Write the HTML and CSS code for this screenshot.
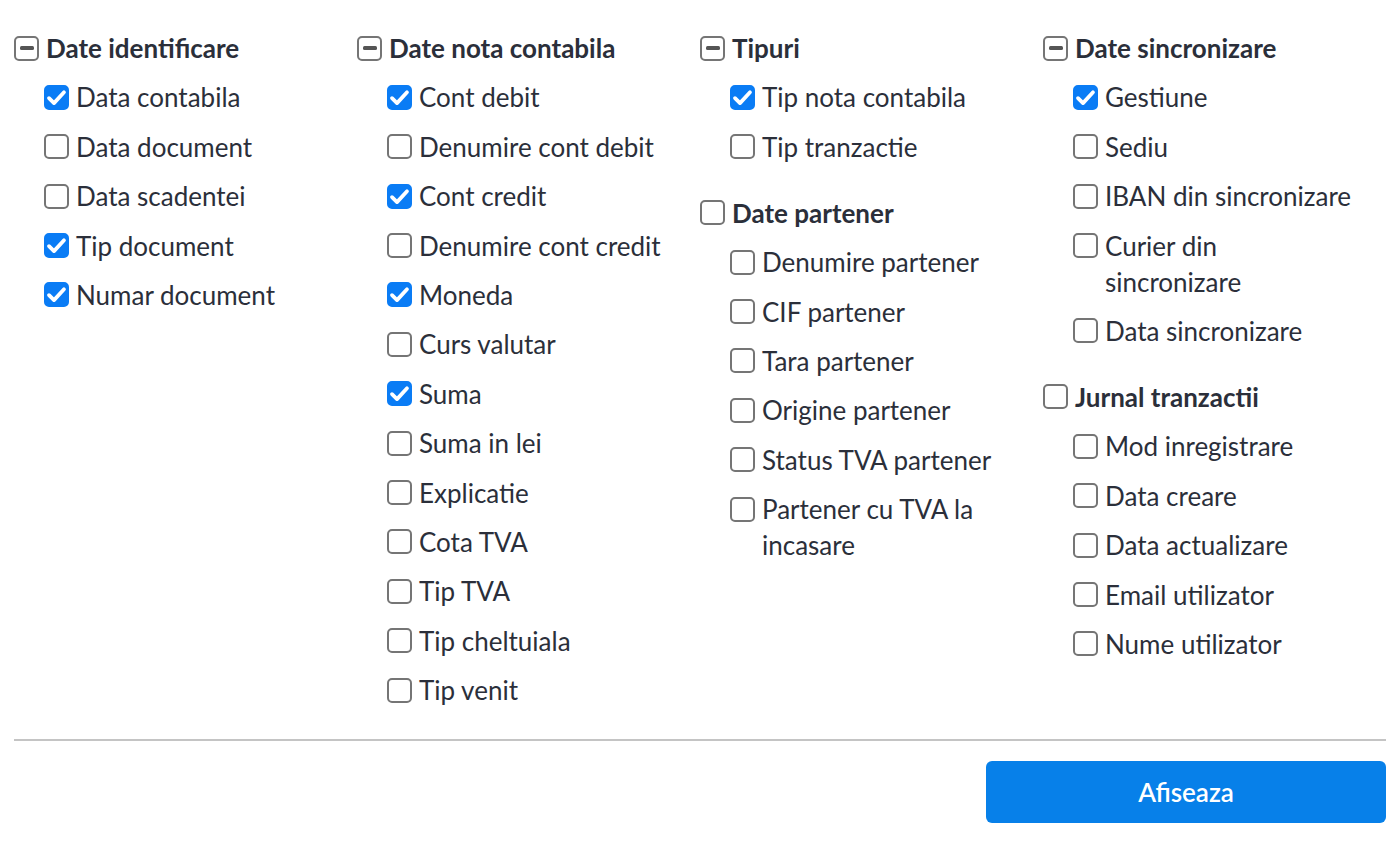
FILE: index.html
```html
<!DOCTYPE html>
<html lang="ro">
<head>
<meta charset="utf-8">
<title>Coloane</title>
<link rel="stylesheet" href="styles.css">
</head>
<body>
<div class="panel">
  <div class="columns">
    <div class="col">
      <div class="group">
        <div class="row head"><span class="box ind"></span><span class="lbl">Date identificare</span></div>
        <div class="items">
          <div class="row"><span class="box on"><svg viewBox="0 0 24 24"><path d="M4.8 12.6l4.8 4.8 9.6-10.4"/></svg></span><span class="lbl">Data contabila</span></div>
          <div class="row"><span class="box"></span><span class="lbl">Data document</span></div>
          <div class="row"><span class="box"></span><span class="lbl">Data scadentei</span></div>
          <div class="row"><span class="box on"><svg viewBox="0 0 24 24"><path d="M4.8 12.6l4.8 4.8 9.6-10.4"/></svg></span><span class="lbl">Tip document</span></div>
          <div class="row"><span class="box on"><svg viewBox="0 0 24 24"><path d="M4.8 12.6l4.8 4.8 9.6-10.4"/></svg></span><span class="lbl">Numar document</span></div>
        </div>
      </div>
    </div>
    <div class="col">
      <div class="group">
        <div class="row head"><span class="box ind"></span><span class="lbl">Date nota contabila</span></div>
        <div class="items">
          <div class="row"><span class="box on"><svg viewBox="0 0 24 24"><path d="M4.8 12.6l4.8 4.8 9.6-10.4"/></svg></span><span class="lbl">Cont debit</span></div>
          <div class="row"><span class="box"></span><span class="lbl">Denumire cont debit</span></div>
          <div class="row"><span class="box on"><svg viewBox="0 0 24 24"><path d="M4.8 12.6l4.8 4.8 9.6-10.4"/></svg></span><span class="lbl">Cont credit</span></div>
          <div class="row"><span class="box"></span><span class="lbl">Denumire cont credit</span></div>
          <div class="row"><span class="box on"><svg viewBox="0 0 24 24"><path d="M4.8 12.6l4.8 4.8 9.6-10.4"/></svg></span><span class="lbl">Moneda</span></div>
          <div class="row"><span class="box"></span><span class="lbl">Curs valutar</span></div>
          <div class="row"><span class="box on"><svg viewBox="0 0 24 24"><path d="M4.8 12.6l4.8 4.8 9.6-10.4"/></svg></span><span class="lbl">Suma</span></div>
          <div class="row"><span class="box"></span><span class="lbl">Suma in lei</span></div>
          <div class="row"><span class="box"></span><span class="lbl">Explicatie</span></div>
          <div class="row"><span class="box"></span><span class="lbl">Cota TVA</span></div>
          <div class="row"><span class="box"></span><span class="lbl">Tip TVA</span></div>
          <div class="row"><span class="box"></span><span class="lbl">Tip cheltuiala</span></div>
          <div class="row"><span class="box"></span><span class="lbl">Tip venit</span></div>
        </div>
      </div>
    </div>
    <div class="col">
      <div class="group">
        <div class="row head"><span class="box ind"></span><span class="lbl">Tipuri</span></div>
        <div class="items">
          <div class="row"><span class="box on"><svg viewBox="0 0 24 24"><path d="M4.8 12.6l4.8 4.8 9.6-10.4"/></svg></span><span class="lbl">Tip nota contabila</span></div>
          <div class="row"><span class="box"></span><span class="lbl">Tip tranzactie</span></div>
        </div>
      </div>
      <div class="group">
        <div class="row head"><span class="box"></span><span class="lbl">Date partener</span></div>
        <div class="items">
          <div class="row"><span class="box"></span><span class="lbl">Denumire partener</span></div>
          <div class="row"><span class="box"></span><span class="lbl">CIF partener</span></div>
          <div class="row"><span class="box"></span><span class="lbl">Tara partener</span></div>
          <div class="row"><span class="box"></span><span class="lbl">Origine partener</span></div>
          <div class="row"><span class="box"></span><span class="lbl">Status TVA partener</span></div>
          <div class="row"><span class="box"></span><span class="lbl narrow">Partener cu TVA la incasare</span></div>
        </div>
      </div>
    </div>
    <div class="col">
      <div class="group">
        <div class="row head"><span class="box ind"></span><span class="lbl">Date sincronizare</span></div>
        <div class="items">
          <div class="row"><span class="box on"><svg viewBox="0 0 24 24"><path d="M4.8 12.6l4.8 4.8 9.6-10.4"/></svg></span><span class="lbl">Gestiune</span></div>
          <div class="row"><span class="box"></span><span class="lbl">Sediu</span></div>
          <div class="row"><span class="box"></span><span class="lbl">IBAN din sincronizare</span></div>
          <div class="row"><span class="box"></span><span class="lbl narrow">Curier din sincronizare</span></div>
          <div class="row"><span class="box"></span><span class="lbl">Data sincronizare</span></div>
        </div>
      </div>
      <div class="group">
        <div class="row head"><span class="box"></span><span class="lbl">Jurnal tranzactii</span></div>
        <div class="items">
          <div class="row"><span class="box"></span><span class="lbl">Mod inregistrare</span></div>
          <div class="row"><span class="box"></span><span class="lbl">Data creare</span></div>
          <div class="row"><span class="box"></span><span class="lbl">Data actualizare</span></div>
          <div class="row"><span class="box"></span><span class="lbl">Email utilizator</span></div>
          <div class="row"><span class="box"></span><span class="lbl">Nume utilizator</span></div>
        </div>
      </div>
    </div>
  </div>
  <div class="divider"></div>
  <div class="actions">
    <button class="btn">Afiseaza</button>
  </div>
</div>
</body>
</html>
```

FILE: styles.css
```css
* { box-sizing: border-box; }
html, body { margin: 0; padding: 0; background: #ffffff; }
body {
  font-family: Lato, "Open Sans", "Liberation Sans", sans-serif;
  color: #2b2f3a;
  font-size: 26px;
}
.panel {
  padding: 30px 14px 0;
}
.columns {
  display: grid;
  grid-template-columns: repeat(4, 1fr);
}
.group + .group {
  margin-top: 30px;
}
.items {
  padding-left: 30px;
}
.items .row {
  margin-top: 13.4px;
}
.row {
  display: flex;
  align-items: flex-start;
  line-height: 36px;
}
.head .lbl {
  font-weight: 700;
}
.lbl {
  margin-left: 7px;
}
.lbl.narrow {
  max-width: 250px;
}
.box {
  flex: none;
  width: 25px;
  height: 25px;
  margin-top: 5.5px;
  border: 2px solid #757575;
  border-radius: 5px;
  background: #ffffff;
  display: flex;
  align-items: center;
  justify-content: center;
}
.box.on {
  background: #0a7cf5;
  border-color: #0a7cf5;
}
.box.on svg {
  flex: none;
  width: 25px;
  height: 25px;
  fill: none;
  stroke: #ffffff;
  stroke-width: 3.6;
  stroke-linecap: round;
  stroke-linejoin: round;
}
.box.ind::after {
  content: "";
  width: 14px;
  height: 4px;
  border-radius: 1.5px;
  background: #555555;
}
.divider {
  margin-top: 31px;
  height: 2px;
  background: #c4c4c4;
}
.actions {
  display: flex;
  justify-content: flex-end;
  padding-top: 20px;
}
.btn {
  width: 400px;
  height: 62px;
  border: none;
  border-radius: 6px;
  background: #0780e9;
  color: #ffffff;
  font-family: Lato, "Open Sans", "Liberation Sans", sans-serif;
  font-size: 26px;
  font-weight: 600;
  cursor: pointer;
}
```
